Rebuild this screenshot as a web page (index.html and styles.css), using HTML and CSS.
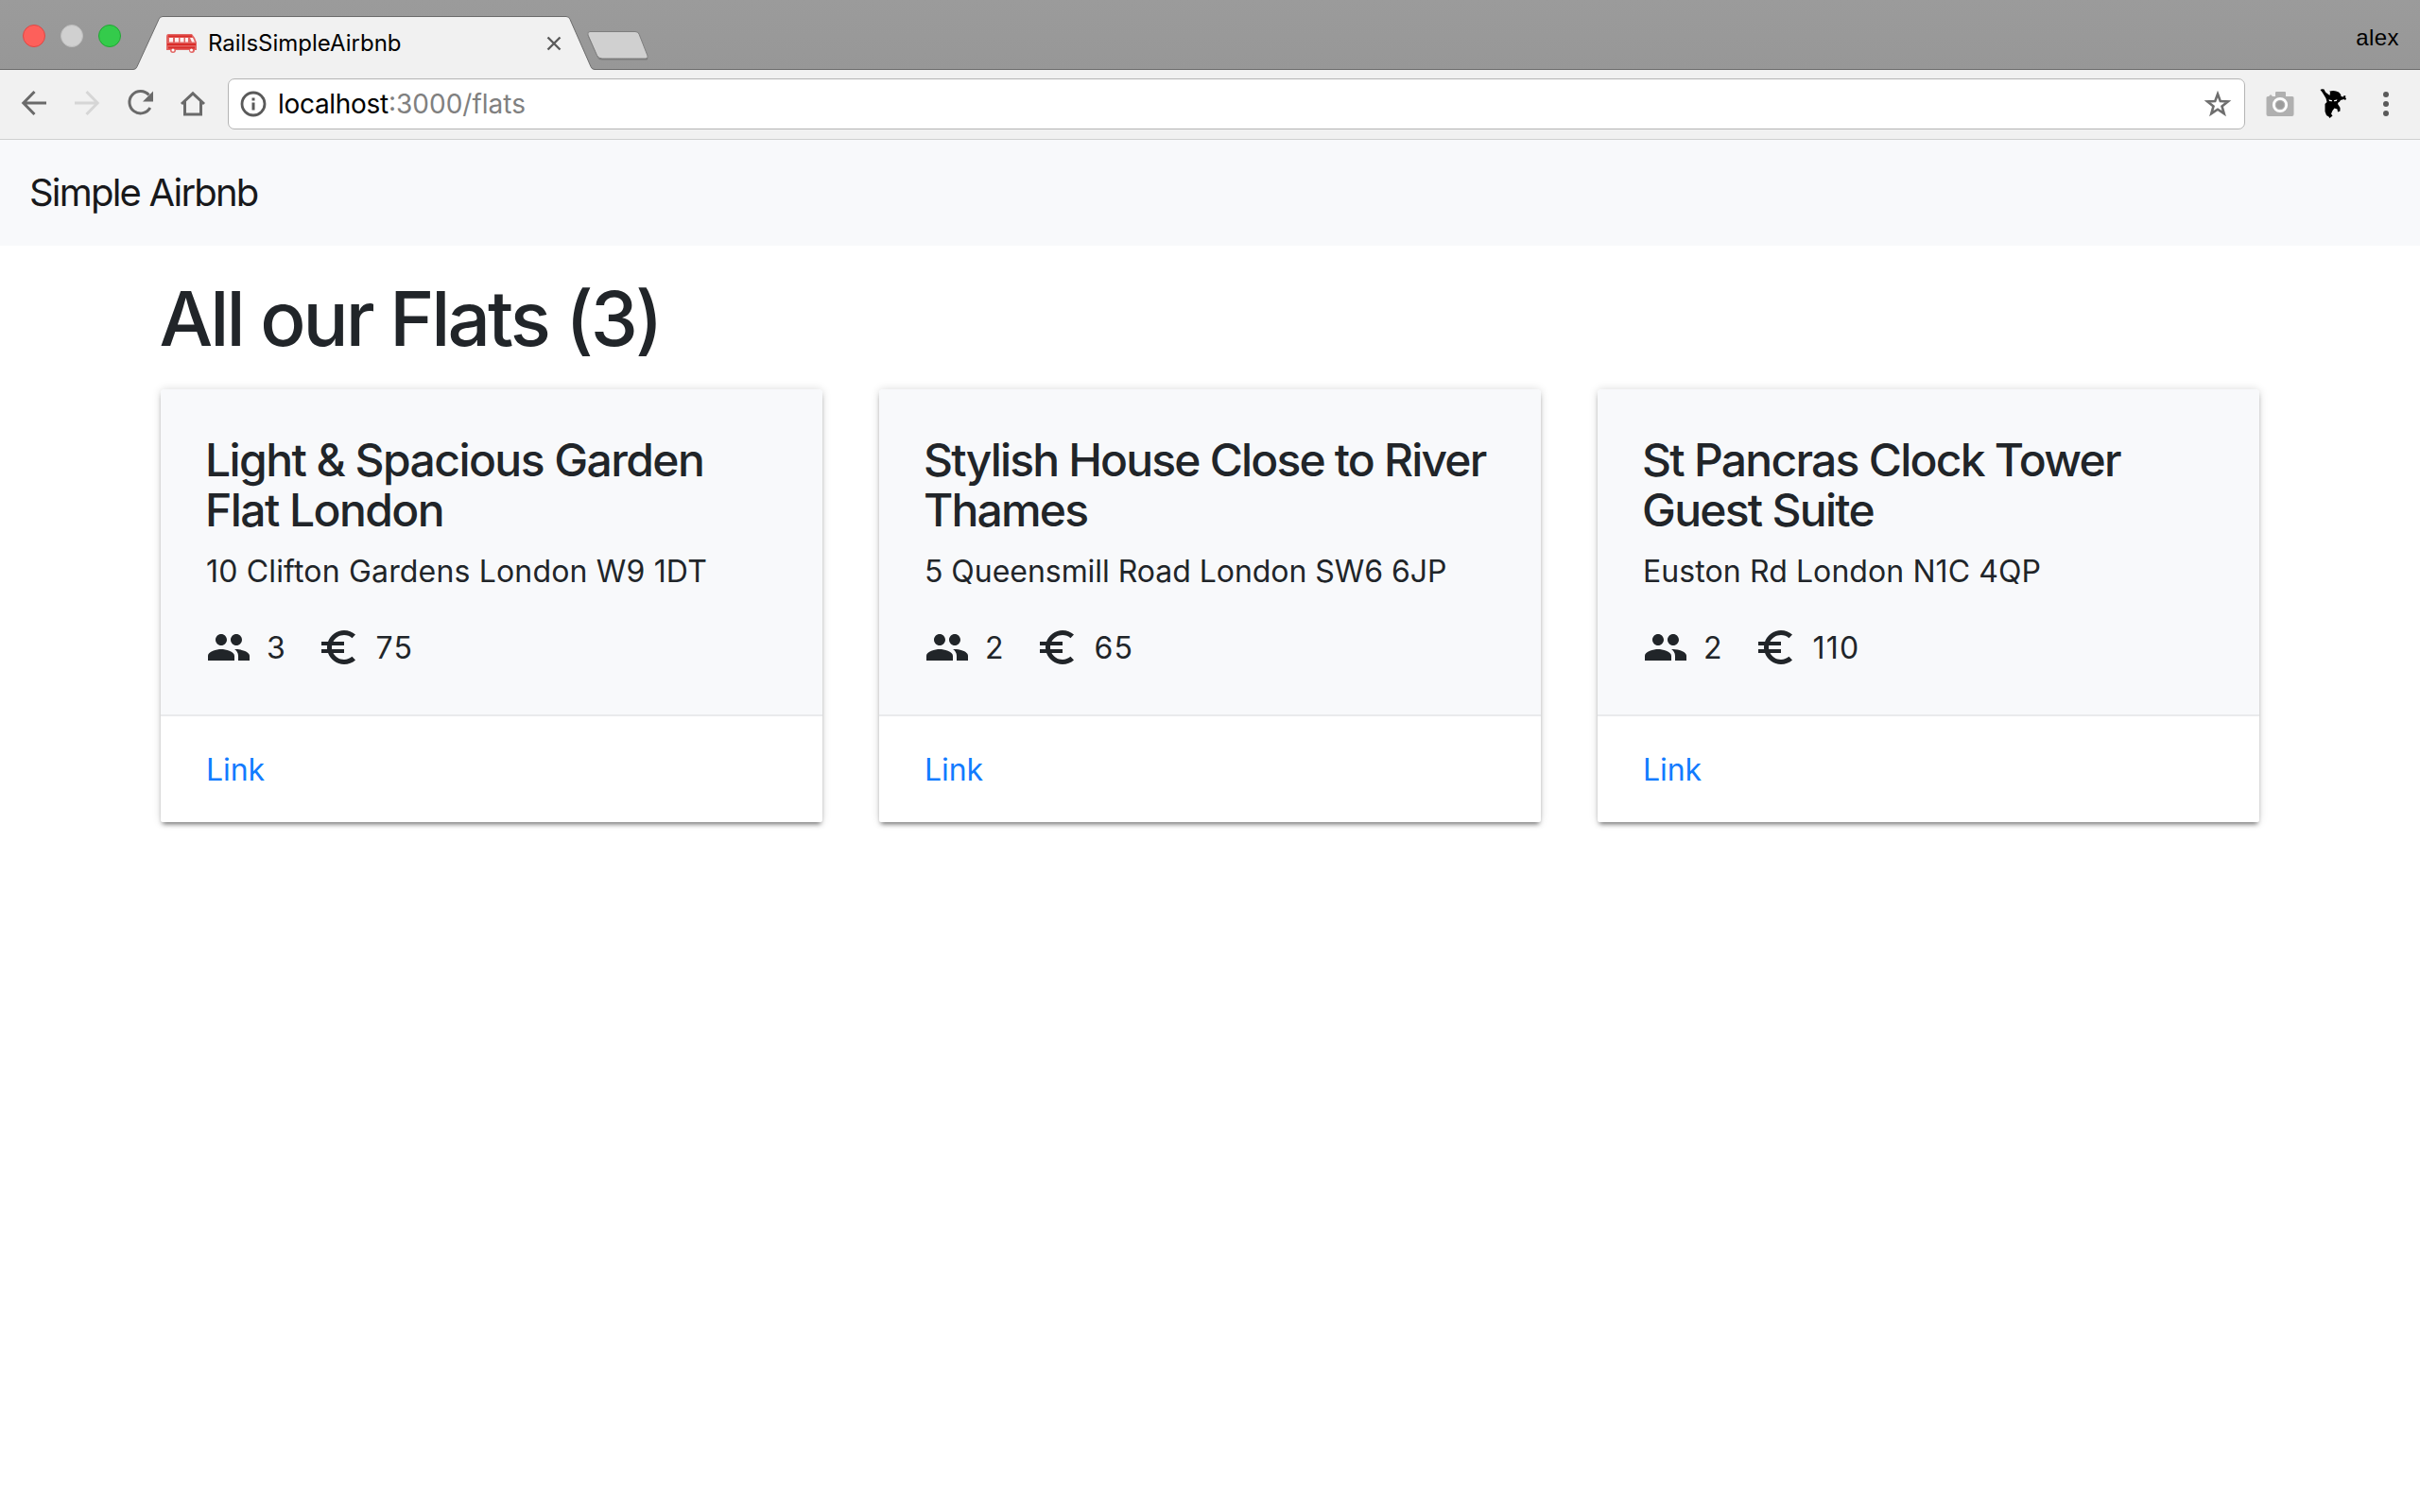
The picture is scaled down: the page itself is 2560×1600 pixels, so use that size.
FILE: index.html
```
<!DOCTYPE html>
<html lang="en">
<head>
<meta charset="utf-8">
<title>RailsSimpleAirbnb</title>
<link rel="stylesheet" href="styles.css">
</head>
<body>
<svg class="sprite" aria-hidden="true">
  <symbol id="people" viewBox="0 0 24 24"><path d="M16 11c1.66 0 2.99-1.34 2.99-3S17.66 5 16 5c-1.66 0-3 1.34-3 3s1.34 3 3 3zm-8 0c1.66 0 2.99-1.34 2.99-3S9.66 5 8 5C6.34 5 5 6.34 5 8s1.34 3 3 3zm0 2c-2.33 0-7 1.17-7 3.5V19h14v-2.5c0-2.33-4.67-3.5-7-3.5zm8 0c-.29 0-.62.02-.97.05 1.16.84 1.97 1.97 1.97 3.45V19h6v-2.5c0-2.33-4.67-3.5-7-3.5z"/></symbol>
  <symbol id="euro" viewBox="0 0 24 24"><path d="M15 18.5c-2.51 0-4.68-1.42-5.76-3.5H15v-2H8.58c-.05-.33-.08-.66-.08-1s.03-.67.08-1H15V9H9.24C10.32 6.92 12.5 5.5 15 5.5c1.61 0 3.09.59 4.23 1.57L21 5.3C19.41 3.87 17.3 3 15 3c-3.92 0-7.24 2.51-8.48 6H3v2h3.06c-.04.33-.06.66-.06 1s.02.67.06 1H3v2h3.52c1.24 3.49 4.56 6 8.48 6 2.31 0 4.41-.87 6-2.3l-1.78-1.77c-1.13.98-2.6 1.57-4.22 1.57z"/></symbol>
</svg>

<header class="browser">
  <div class="tabstrip">
    <div class="lights"><i class="light red"></i><i class="light gray"></i><i class="light green"></i></div>
    <div class="tab">
      <svg class="tab-shape" width="492" height="57" viewBox="0 0 492 57"><path d="M0 57V56.500H1q3 0 4-3L28 3.500q1-3 4-3H459q3 0 4 3L485 53.500q1 3 4 3h3V57z" fill="#f1f1f1"/><path d="M0 56.500H1q3 0 4-3L28 3.500q1-3 4-3H459q3 0 4 3L485 53.500q1 3 4 3h3" fill="none" stroke="#6c6c6c"/></svg>
      <svg class="favicon" width="32" height="20" viewBox="0 0 32 20">
        <path d="M2 0H27l3 4 2 5v8H30a3 3 0 0 1-6 0H10a3 3 0 0 1-6 0H0V3q0-3 2-3z" fill="#e26361"/>
        <path d="M1 10H31v2H1zM2 13.500H30v2H2zM2 1.500H27v1.800H2z" fill="#da2c28"/>
        <path d="M3 4h4v4.500H3zM9 4h4v4.500H9zM14.500 4h4v4.500h-4zM20 4h3v4.500h-3zM25 4h3l2 4.500h-3z" fill="#fdf0ef"/>
        <circle cx="7" cy="17" r="1.500" fill="#fff"/><circle cx="26.500" cy="17" r="1.500" fill="#fff"/>
      </svg>
      <span class="tab-title">RailsSimpleAirbnb</span>
      <svg class="tab-close" width="16" height="16" viewBox="0 0 16 16"><path d="M1.500 1.500l13 13M14.500 1.500l-13 13" stroke="#5a5a5a" stroke-width="2.400" fill="none"/></svg>
    </div>
    <svg class="newtab" width="68" height="34" viewBox="0 0 68 34"><path d="M5 2H53q3 0 4 2L66 28q1 2-2 2H18q-4 0-5-3L3 5q-1-3 2-3z" fill="#000" opacity=".18" transform="translate(0 1.500)"/><path d="M5 1.500H53q3 0 4 2.500L66 27q1 3-2 3H18q-4 0-5.500-3.500L3 5q-1-3.500 2-3.500z" fill="#d0d0d0" stroke="#7e7e7e"/></svg>
    <span class="profile">alex</span>
  </div>

  <div class="toolbar">
    <svg class="nav-icons" width="241" height="74" viewBox="0 73.500 241 74" fill="none" stroke="#6a6a6a" stroke-width="3">
      <path d="M49 109.500H25M36.500 97.500L24.800 109.500L36.500 121.500"/>
      <path d="M79 109.500H103M91.500 97.500L103.200 109.500L91.500 121.500" stroke="#d6d6d6"/>
      <path d="M157.500 101A11.700 11.700 0 1 0 158.800 114.500"/>
      <path d="M162 97v11h-11z" fill="#6a6a6a" stroke="none"/>
      <path d="M192 110.500L204 99.300L216 110.500M195.500 108V121.500H212.500V108"/>
    </svg>
    <div class="address">
      <svg class="info" width="28" height="28" viewBox="0 0 28 28"><circle cx="14" cy="14" r="12" fill="none" stroke="#5a5a5a" stroke-width="2.800"/><path d="M12.500 7.500h3v3h-3zM12.500 12.500h3v8h-3z" fill="#5a5a5a"/></svg>
      <span class="host">localhost</span><span class="path">:3000/flats</span>
      <svg class="star" width="32" height="32" viewBox="0 0 32 32"><path d="M16 5.500L18.800 13.100L26.800 13.400L20.500 18.400L22.700 26.200L16 21.700L9.300 26.200L11.500 18.400L5.200 13.400L13.200 13.100Z" fill="none" stroke="#6e6e6e" stroke-width="2.600"/></svg>
    </div>
    <svg class="camera" width="30" height="28" viewBox="0 0 30 28"><path d="M3 6l2-2 2 2h3V2q0-1 1-1h9q1 0 1 1v4h7q1.500 0 1.500 1.500V25q0 2-2 2h-25q-2 0-2-2V7.500Q.5 6 2 6z" fill="#b0b0b0"/><circle cx="15" cy="15" r="6.700" fill="#b0b0b0" stroke="#fff" stroke-width="2.800"/><circle cx="15" cy="15" r="4" fill="#9c9c9c"/></svg>
    <svg class="ninja" width="44" height="44" viewBox="0 0 44 44"><path d="M6.500 7Q8 5.800 10.500 6.500L12 9.500L16.500 13L17 9.500L16 8.800L18 8.300Q22 7.300 26 9.500Q28.500 11.500 28.500 14L31 14.500L31.500 13L33.500 13.500L33 15L34 16.500L33 18L31.500 17L28 18Q27 20 25.500 20.500L25 22L27.500 26V29.500L25 30.500L24.500 27.500L21.500 26.500L19.500 29L18 32.500L19.500 34.500L16.500 37L15.500 35.500L13 34L11.500 30V22L13.500 20L12.500 16L8.500 9.500Z" fill="#000"/><path d="M15.500 17.200l3.500 1v1l-3-.3zM21 18.200l3.500-.9-.8 1.700-2.700.2z" fill="#fff"/></svg>
    <svg class="dots" width="6" height="28" viewBox="0 0 6 28"><circle cx="3" cy="4" r="3"/><circle cx="3" cy="14" r="3"/><circle cx="3" cy="24" r="3"/></svg>
  </div>
</header>

<nav class="navbar"><a class="brand" href="#">Simple Airbnb</a></nav>

<main class="container">
  <h1 class="page-title">All our Flats (3)</h1>
  <div class="cards">
    <article class="card">
      <div class="card-body">
        <h2 class="card-title">Light &amp; Spacious Garden<br>Flat London</h2>
        <p class="card-text">10 Clifton Gardens London W9 1DT</p>
        <div class="facts">
          <svg class="icon"><use href="#people"/></svg><span class="guests">3</span>
          <svg class="icon"><use href="#euro"/></svg><span class="price">75</span>
        </div>
      </div>
      <div class="card-footer"><a class="card-link" href="#">Link</a></div>
    </article>
    <article class="card">
      <div class="card-body">
        <h2 class="card-title">Stylish House Close to River<br>Thames</h2>
        <p class="card-text">5 Queensmill Road London SW6 6JP</p>
        <div class="facts">
          <svg class="icon"><use href="#people"/></svg><span class="guests">2</span>
          <svg class="icon"><use href="#euro"/></svg><span class="price">65</span>
        </div>
      </div>
      <div class="card-footer"><a class="card-link" href="#">Link</a></div>
    </article>
    <article class="card">
      <div class="card-body">
        <h2 class="card-title">St Pancras Clock Tower<br>Guest Suite</h2>
        <p class="card-text">Euston Rd London N1C 4QP</p>
        <div class="facts">
          <svg class="icon"><use href="#people"/></svg><span class="guests">2</span>
          <svg class="icon"><use href="#euro"/></svg><span class="price">110</span>
        </div>
      </div>
      <div class="card-footer"><a class="card-link" href="#">Link</a></div>
    </article>
  </div>
</main>
</body>
</html>
```
FILE: styles.css
```
* { box-sizing: border-box; }
body {
  margin: 0;
  min-height: 1600px;
  background: #fff;
  color: #212529;
  font: 400 32px/48px Inter, "Liberation Sans", sans-serif;
}
a { text-decoration: none; }
svg { display: block; flex: none; }
.sprite { position: absolute; width: 0; height: 0; }

/* Browser window */
.tabstrip {
  display: flex;
  align-items: flex-end;
  height: 74px;
  background: linear-gradient(#9b9b9b, #979797);
  box-shadow: inset 0 -1px #6c6c6c;
}
.lights { display: flex; gap: 16px; align-self: flex-start; padding: 26px 0 0 24px; width: 140px; }
.light { width: 24px; height: 24px; border-radius: 50%; border: 1px solid; }
.red { background: #fd605b; border-color: #dd4744; }
.gray { background: #d0d0d0; border-color: #bdbdbd; }
.green { background: #34cb4b; border-color: #22a634; }
.tab { position: relative; display: flex; width: 492px; height: 57px; padding-left: 36px; }
.tab-shape { position: absolute; left: 0; top: 0; }
.favicon { position: relative; margin-top: 19px; }
.tab-title {
  position: relative;
  margin: 13px 0 0 12px;
  width: 358px;
  color: #000;
  font-size: 24px;
  line-height: 32px;
}
.tab-close { position: relative; margin-top: 21px; }
.newtab { margin: 0 0 8px -13px; }
.profile {
  margin: 0 22px 18px auto;
  color: #000;
  font: 24px/32px "Liberation Sans", sans-serif;
  letter-spacing: .4px;
}
.toolbar {
  display: flex;
  align-items: center;
  height: 74px;
  padding-bottom: 1px;
  background: #f1f1f1;
  border-bottom: 1px solid #d0d0d0;
}
.address {
  display: flex;
  align-items: center;
  width: 2134px;
  height: 54px;
  padding: 0 12px;
  border: 1px solid #b4b4b4;
  border-radius: 7px;
  background: #fff;
  font-size: 28px;
  line-height: 36px;
}
.info { margin-right: 12px; }
.host { color: #000; letter-spacing: -.3px; }
.path { color: #808080; }
.star { margin-left: auto; }
.camera { margin-left: 22px; }
.ninja { margin-left: 21px; }
.dots { margin-left: 29px; fill: #5a5a5a; }

/* Page */
.navbar { display: flex; align-items: center; height: 112px; padding: 0 31px; background: #f8f9fb; }
.brand { color: #18191b; font-size: 40px; letter-spacing: -1.800px; }
.container { padding: 33px 170px 0; }
.page-title { margin: 0 0 31px -1.500px; font-size: 80px; font-weight: 500; line-height: 88px; letter-spacing: -2.930px; }
.cards { display: grid; grid-template-columns: repeat(3, 700px); gap: 60px; }
.card {
  border-radius: 4px 4px 2px 2px;
  background: #fff;
  box-shadow: 0 0 10px rgba(0, 0, 0, .15), 0 4px 5px -2px rgba(0, 0, 0, .5);
}
.card-body { height: 344px; padding: 49px 47px 0; border-radius: 4px 4px 0 0; background: #f8f9fb; }
.card-title { margin: 0 0 14px; font-size: 48px; font-weight: 500; line-height: 52.800px; letter-spacing: -1.570px; }
.card:nth-child(2) .card-title { letter-spacing: -1.830px; }
.card:nth-child(3) .card-title { letter-spacing: -1.740px; }
.card-text { margin: 0 1px 31.400px; letter-spacing: .170px; }
.card:nth-child(2) .card-text { letter-spacing: -.040px; }
.card:nth-child(3) .card-text { letter-spacing: .090px; }
.facts { display: flex; align-items: center; padding-left: 1px; }
.icon { width: 48px; height: 48px; fill: #212529; }
.guests { width: 52px; margin: 2px 0 0 16px; }
.price { margin: 2px 0 0 15.500px; letter-spacing: 1.200px; }
.card-footer { display: flex; align-items: center; height: 114px; padding: 2px 48px 0; border-top: 2px solid #e9eaec; }
.card-link { color: #127bff; letter-spacing: -.100px; }
```
